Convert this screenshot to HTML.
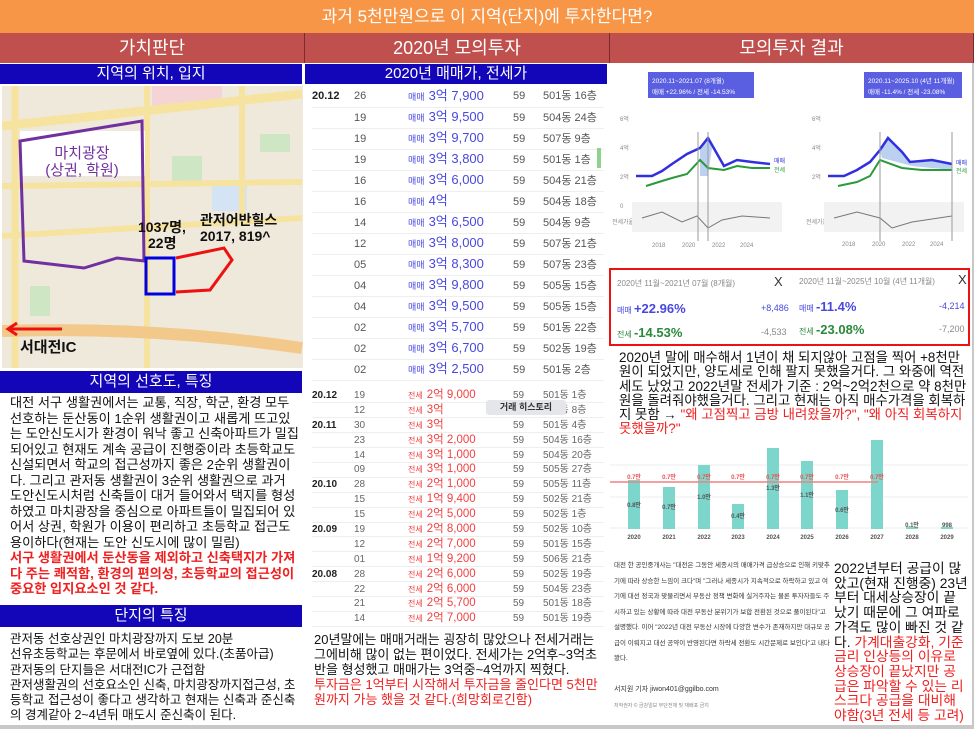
<!DOCTYPE html>
<html><head><meta charset="utf-8"><style>
*{margin:0;padding:0;box-sizing:border-box}
body{width:974px;height:729px;position:relative;background:#fff;font-family:"Liberation Sans","Noto Sans CJK KR",sans-serif;overflow:hidden}
.a{position:absolute}
.hdr{background:#c0504d;color:#fff;font-size:18px;text-align:center;line-height:30px;top:33px;height:30px;border-right:1px solid #7a2a28}
.blue{background:#1306b8;color:#fff;text-align:center;font-size:15px}
.t{font-size:12.5px;line-height:15.5px;color:#111}
.r{color:#f02020}
table{border-collapse:collapse;table-layout:fixed}
td{padding:0;overflow:hidden}
.s td{height:21px;line-height:16px;font-size:11px;color:#555;border-bottom:1px solid #eee;white-space:nowrap}
.s .p{color:#4848e0;font-size:13px}
.s .p small{font-size:9px;margin-right:4px}
.j td{height:14.9px;line-height:13px;font-size:10px;color:#666;border-bottom:1px solid #eee;white-space:nowrap}
.j .p{color:#f24040;font-size:11.5px}
.j .p small{font-size:8px;margin-right:4px}
.d{font-weight:bold;color:#222!important;font-size:11px}
</style></head><body>
<div class="a" style="left:0;top:0;width:974px;height:33px;background:#f79646;color:#fff;font-size:17px;text-align:center;line-height:33px">과거 5천만원으로 이 지역(단지)에 투자한다면?</div>
<div class="a hdr" style="left:0;width:305px">가치판단</div>
<div class="a hdr" style="left:305px;width:305px">2020년 모의투자</div>
<div class="a hdr" style="left:610px;width:364px">모의투자 결과</div>
<div class="a" style="left:0;top:63px;width:974px;height:666px;background:#c8c8c8"></div>
<div class="a" style="left:0;top:63px;width:305px;height:662px;background:#fff"></div>
<div class="a" style="left:305px;top:63px;width:305px;height:662px;background:#fff"></div>
<div class="a" style="left:610px;top:63px;width:362px;height:662px;background:#fff"></div>
<div class="a blue" style="left:0;top:64px;width:302px;height:20px;line-height:20px">지역의 위치, 입지</div>
<div class="a blue" style="left:305px;top:64px;width:302px;height:20px;line-height:20px">2020년 매매가, 전세가</div>

<svg class="a" style="left:2px;top:86px" width="301" height="282" viewBox="0 0 301 282">
<rect width="301" height="282" fill="#efe9dc"/>
<rect x="150" y="0" width="70" height="20" fill="#f4d4d4"/>
<rect x="170" y="70" width="30" height="30" fill="#cfe6c4"/>
<rect x="258" y="48" width="30" height="18" fill="#cfe6c4"/>
<rect x="28" y="200" width="20" height="30" fill="#cfe6c4"/>
<rect x="210" y="95" width="35" height="30" fill="#d4e4f4"/>
<path d="M0 40 L300 8" stroke="#f7e3a0" stroke-width="9"/>
<path d="M0 100 L300 96" stroke="#f7e3a0" stroke-width="6"/>
<path d="M0 150 L300 132" stroke="#f7e3a0" stroke-width="6"/>
<path d="M13 0 L13 282" stroke="#f7e3a0" stroke-width="7"/>
<path d="M145 0 L145 282" stroke="#f7e3a0" stroke-width="6"/>
<path d="M240 0 L240 130" stroke="#f7e3a0" stroke-width="6"/>
<path d="M0 245 Q150 240 300 262" stroke="#f2c98a" stroke-width="12" fill="none"/>
<rect x="18" y="45" width="125" height="45" fill="#fff"/>
<path d="M18 55 L140 35 L142 175 L115 172 L82 182 L22 175 Z" stroke="#7030a0" stroke-width="3" fill="none"/>
<rect x="144" y="172" width="28" height="36" stroke="#0000e0" stroke-width="3" fill="none"/>
<path d="M174 172 L222 162 L230 174 L208 204 L174 206" stroke="#ee1111" stroke-width="3" fill="none"/>
<path d="M8 243 L60 243" stroke="#ee1111" stroke-width="3"/>
<path d="M15 237 L6 243 L15 249" stroke="#ee1111" stroke-width="3" fill="none"/>
<text x="80" y="72" font-size="15" fill="#7030a0" text-anchor="middle" font-family="Liberation Sans,Noto Sans CJK KR,sans-serif">마치광장</text>
<text x="80" y="89" font-size="15" fill="#7030a0" text-anchor="middle" font-family="Liberation Sans,Noto Sans CJK KR,sans-serif">(상권, 학원)</text>
<text x="136" y="146" font-size="14" fill="#111" font-weight="bold" font-family="Liberation Sans,Noto Sans CJK KR,sans-serif">1037명,</text>
<text x="146" y="162" font-size="14" fill="#111" font-weight="bold" font-family="Liberation Sans,Noto Sans CJK KR,sans-serif">22명</text>
<text x="198" y="139" font-size="14" fill="#111" font-weight="bold" font-family="Liberation Sans,Noto Sans CJK KR,sans-serif">관저어반힐스</text>
<text x="198" y="155" font-size="14" fill="#111" font-weight="bold" font-family="Liberation Sans,Noto Sans CJK KR,sans-serif">2017, 819^</text>
<text x="18" y="266" font-size="15" fill="#111" font-weight="bold" font-family="Liberation Sans,Noto Sans CJK KR,sans-serif">서대전IC</text>
</svg>

<div class="a blue" style="left:0;top:371px;width:302px;height:22px;line-height:22px">지역의 선호도, 특징</div>
<div class="a t" style="left:10px;top:395px;width:290px;font-size:13.2px;line-height:15.5px">대전 서구 생활권에서는 교통, 직장, 학군, 환경 모두 선호하는 둔산동이 1순위 생활권이고 새롭게 뜨고있는 도안신도시가 환경이 워낙 좋고 신축아파트가 밀집되어있고 현재도 계속 공급이 진행중이라 초등학교도 신설되면서 학교의 접근성까지 좋은 2순위 생활권이다. 그리고 관저동 생활권이 3순위 생활권으로 과거 도안신도시처럼 신축들이 대거 들어와서 택지를 형성하였고 마치광장을 중심으로 아파트들이 밀집되어 있어서 상권, 학원가 이용이 편리하고 초등학교 접근도 용이하다(현재는 도안 신도시에 많이 밀림)<br><b class="r">서구 생활권에서 둔산동을 제외하고 신축택지가 가져다 주는 쾌적함, 환경의 편의성, 초등학교의 접근성이 중요한 입지요소인 것 같다.</b></div>
<div class="a blue" style="left:0;top:605px;width:302px;height:22px;line-height:22px">단지의 특징</div>
<div class="a t" style="left:10px;top:632px;width:292px;line-height:15.3px">관저동 선호상권인 마치광장까지 도보 20분<br>선유초등학교는 후문에서 바로옆에 있다.(초품아급)<br>관저동의 단지들은 서대전IC가 근접함<br>관저생활권의 선호요소인 신축, 마치광장까지접근성, 초등학교 접근성이 좋다고 생각하고 현재는 신축과 준신축의 경계같아 2~4년뒤 매도시 준신축이 된다.</div>

<table class="a s" style="left:312px;top:86px;width:292px">
<colgroup><col style="width:42px"><col style="width:54px"><col style="width:105px"><col style="width:30px"><col></colgroup>
<tr><td class="d">20.12</td><td>26</td><td class="p"><small>매매</small>3억 7,900</td><td>59</td><td>501동 16층</td></tr>
<tr><td></td><td>19</td><td class="p"><small>매매</small>3억 9,500</td><td>59</td><td>504동 24층</td></tr>
<tr><td></td><td>19</td><td class="p"><small>매매</small>3억 9,700</td><td>59</td><td>507동 9층</td></tr>
<tr><td></td><td>19</td><td class="p"><small>매매</small>3억 3,800</td><td>59</td><td>501동 1층</td></tr>
<tr><td></td><td>16</td><td class="p"><small>매매</small>3억 6,000</td><td>59</td><td>504동 21층</td></tr>
<tr><td></td><td>16</td><td class="p"><small>매매</small>4억</td><td>59</td><td>504동 18층</td></tr>
<tr><td></td><td>14</td><td class="p"><small>매매</small>3억 6,500</td><td>59</td><td>504동 9층</td></tr>
<tr><td></td><td>12</td><td class="p"><small>매매</small>3억 8,000</td><td>59</td><td>507동 21층</td></tr>
<tr><td></td><td>05</td><td class="p"><small>매매</small>3억 8,300</td><td>59</td><td>507동 23층</td></tr>
<tr><td></td><td>04</td><td class="p"><small>매매</small>3억 9,800</td><td>59</td><td>505동 15층</td></tr>
<tr><td></td><td>04</td><td class="p"><small>매매</small>3억 9,500</td><td>59</td><td>505동 15층</td></tr>
<tr><td></td><td>02</td><td class="p"><small>매매</small>3억 5,700</td><td>59</td><td>501동 22층</td></tr>
<tr><td></td><td>02</td><td class="p"><small>매매</small>3억 6,700</td><td>59</td><td>502동 19층</td></tr>
<tr><td></td><td>02</td><td class="p"><small>매매</small>3억 2,500</td><td>59</td><td>501동 2층</td></tr>
</table>
<div class="a" style="left:597px;top:148px;width:4px;height:20px;background:#8fd18f"></div>

<table class="a j" style="left:312px;top:388px;width:292px">
<colgroup><col style="width:42px"><col style="width:54px"><col style="width:105px"><col style="width:30px"><col></colgroup>
<tr><td class="d">20.12</td><td>19</td><td class="p"><small>전세</small>2억 9,000</td><td>59</td><td>501동 1층</td></tr>
<tr><td></td><td>12</td><td class="p"><small>전세</small>3억</td><td>59</td><td>502동 8층</td></tr>
<tr><td class="d">20.11</td><td>30</td><td class="p"><small>전세</small>3억</td><td>59</td><td>501동 4층</td></tr>
<tr><td></td><td>23</td><td class="p"><small>전세</small>3억 2,000</td><td>59</td><td>504동 16층</td></tr>
<tr><td></td><td>14</td><td class="p"><small>전세</small>3억 1,000</td><td>59</td><td>504동 20층</td></tr>
<tr><td></td><td>09</td><td class="p"><small>전세</small>3억 1,000</td><td>59</td><td>505동 27층</td></tr>
<tr><td class="d">20.10</td><td>28</td><td class="p"><small>전세</small>2억 1,000</td><td>59</td><td>505동 11층</td></tr>
<tr><td></td><td>15</td><td class="p"><small>전세</small>1억 9,400</td><td>59</td><td>502동 21층</td></tr>
<tr><td></td><td>15</td><td class="p"><small>전세</small>2억 5,000</td><td>59</td><td>502동 1층</td></tr>
<tr><td class="d">20.09</td><td>19</td><td class="p"><small>전세</small>2억 8,000</td><td>59</td><td>502동 10층</td></tr>
<tr><td></td><td>12</td><td class="p"><small>전세</small>2억 7,000</td><td>59</td><td>501동 15층</td></tr>
<tr><td></td><td>01</td><td class="p"><small>전세</small>1억 9,200</td><td>59</td><td>506동 21층</td></tr>
<tr><td class="d">20.08</td><td>28</td><td class="p"><small>전세</small>2억 6,000</td><td>59</td><td>502동 19층</td></tr>
<tr><td></td><td>22</td><td class="p"><small>전세</small>2억 6,000</td><td>59</td><td>504동 23층</td></tr>
<tr><td></td><td>21</td><td class="p"><small>전세</small>2억 5,700</td><td>59</td><td>501동 18층</td></tr>
<tr><td></td><td>14</td><td class="p"><small>전세</small>2억 7,000</td><td>59</td><td>501동 19층</td></tr>
</table>
<div class="a" style="left:486px;top:400px;width:80px;height:15px;background:#e4e6ea;border-radius:3px;font-size:9px;font-weight:bold;text-align:center;line-height:15px;color:#333">거래 히스토리</div>
<div class="a t" style="left:314px;top:632px;width:292px;line-height:15px;font-size:13px">20년말에는 매매거래는 굉장히 많았으나 전세거래는 그에비해 많이 없는 편이었다. 전세가는 2억후~3억초반을 형성했고 매매가는 3억중~4억까지 찍혔다.<br><span class="r">투자금은 1억부터 시작해서 투자금을 줄인다면 5천만원까지 가능 했을 것 같다.(희망회로긴함)</span></div>

<svg class="a" style="left:612px;top:66px" width="358" height="192" viewBox="0 0 358 192">
<g font-family="Liberation Sans,Noto Sans CJK KR,sans-serif">
<rect x="36" y="6" width="106" height="26" fill="#5a5ee0"/>
<text x="40" y="17" font-size="6.5" fill="#fff">2020.11~2021.07 (8개월)</text>
<text x="40" y="28" font-size="6.5" fill="#fff">매매 +22.96% / 전세 -14.53%</text>
<rect x="252" y="6" width="98" height="26" fill="#5a5ee0"/>
<text x="256" y="17" font-size="6.5" fill="#fff">2020.11~2025.10 (4년 11개월)</text>
<text x="256" y="28" font-size="6.5" fill="#fff">매매 -11.4% / 전세 -23.08%</text>
<g font-size="6" fill="#888"><text x="8" y="55">6억</text><text x="8" y="84">4억</text><text x="8" y="113">2억</text><text x="8" y="142">0</text><text x="0" y="158">전세가율</text>
<text x="40" y="181">2018</text><text x="70" y="181">2020</text><text x="100" y="181">2022</text><text x="128" y="181">2024</text>
<text x="200" y="55">6억</text><text x="200" y="84">4억</text><text x="200" y="113">2억</text><text x="194" y="158">전세가율</text>
<text x="230" y="180">2018</text><text x="260" y="180">2020</text><text x="290" y="180">2022</text><text x="318" y="180">2024</text></g>
<rect x="20" y="136" width="150" height="30" fill="#f2f2f2"/>
<rect x="212" y="136" width="140" height="30" fill="#f2f2f2"/>
<path d="M88 110 L88 84 L96 72 L100 82 L96 110Z" fill="#bcd0f0"/>
<path d="M24 110 L40 110 L50 105 L60 98 L75 88 L88 82 L96 72 L104 86 L112 100 L125 94 L140 96 L158 98" stroke="#3030e0" stroke-width="2.5" fill="none"/>
<path d="M34 120 L50 115 L60 112 L75 108 L88 94 L96 102 L112 104 L125 100 L140 102 L158 102" stroke="#2a9a3a" stroke-width="2" fill="none"/>
<path d="M30 152 L50 146 L70 156 L85 150 L96 162 L110 154 L130 150 L158 152" stroke="#777" stroke-width="1" fill="none"/>
<line x1="86" y1="66" x2="86" y2="175" stroke="#999"/><line x1="96" y1="66" x2="96" y2="175" stroke="#999"/>
<text x="162" y="97" font-size="6" fill="#3030e0">매매</text><text x="162" y="106" font-size="6" fill="#2a9a3a">전세</text>
<path d="M268 84 L276 72 L290 86 L298 96 L320 94 L340 98 L340 104 L300 100 L270 92Z" fill="#bcd0f0"/>
<path d="M216 110 L232 110 L245 104 L258 96 L268 84 L276 72 L290 86 L298 96 L320 94 L340 98" stroke="#3030e0" stroke-width="2.5" fill="none"/>
<path d="M226 120 L245 116 L258 110 L268 94 L290 102 L310 104 L340 104" stroke="#2a9a3a" stroke-width="2" fill="none"/>
<path d="M222 152 L245 146 L268 152 L280 162 L300 156 L340 150" stroke="#777" stroke-width="1" fill="none"/>
<line x1="268" y1="66" x2="268" y2="175" stroke="#999"/><line x1="340" y1="66" x2="340" y2="175" stroke="#999"/>
<text x="344" y="99" font-size="6" fill="#3030e0">매매</text><text x="344" y="107" font-size="6" fill="#2a9a3a">전세</text>
</g></svg>

<div class="a" style="left:609px;top:268px;width:361px;height:78px;border:2px solid #ee1111;font-size:8px;color:#888">
<div class="a" style="left:6px;top:8px">2020년 11월~2021년 07월 (8개월)</div>
<div class="a" style="left:163px;top:4px;font-size:13px;color:#333">X</div>
<div class="a" style="left:6px;top:31px;color:#4848e0">매매 <b style="font-size:13px">+22.96%</b></div>
<div class="a" style="left:150px;top:33px;color:#4848e0;font-size:9px">+8,486</div>
<div class="a" style="left:6px;top:55px;color:#2a8a3a">전세 <b style="font-size:13px">-14.53%</b></div>
<div class="a" style="left:150px;top:57px;color:#888;font-size:9px">-4,533</div>
<div class="a" style="left:188px;top:6px">2020년 11월~2025년 10월 (4년 11개월)</div>
<div class="a" style="left:347px;top:2px;font-size:13px;color:#333">X</div>
<div class="a" style="left:188px;top:29px;color:#4848e0">매매 <b style="font-size:13px">-11.4%</b></div>
<div class="a" style="left:328px;top:31px;color:#4848e0;font-size:9px">-4,214</div>
<div class="a" style="left:188px;top:52px;color:#2a8a3a">전세 <b style="font-size:13px">-23.08%</b></div>
<div class="a" style="left:328px;top:54px;color:#888;font-size:9px">-7,200</div>
</div>
<div class="a t" style="left:619px;top:351px;width:350px;line-height:14.3px;font-size:13.4px">2020년 말에 매수해서 1년이 채 되지않아 고점을 찍어 +8천만원이 되었지만, 양도세로 인해 팔지 못했을거다. 그 와중에 역전세도 났었고 2022년말 전세가 기준 : 2억~2억2천으로 약 8천만원을 돌려줘야했을거다. 그리고 현재는 아직 매수가격을 회복하지 못함 → <span class="r">"왜 고점찍고 금방 내려왔을까?", "왜 아직 회복하지 못했을까?"</span></div>

<svg class="a" style="left:610px;top:440px" width="362" height="112" viewBox="0 0 362 112">
<g font-family="Liberation Sans,Noto Sans CJK KR,sans-serif" font-size="6" font-weight="bold" text-anchor="middle">
<line x1="0" y1="25" x2="358" y2="25" stroke="#eee"/><line x1="0" y1="57" x2="358" y2="57" stroke="#eee"/><line x1="0" y1="88" x2="358" y2="88" stroke="#eee"/>
<rect x="18" y="40" width="12" height="49" fill="#7dd6cc"/>
<rect x="53" y="47" width="12" height="42" fill="#7dd6cc"/>
<rect x="88" y="25" width="12" height="64" fill="#7dd6cc"/>
<rect x="122" y="64" width="12" height="25" fill="#7dd6cc"/>
<rect x="157" y="8" width="12" height="81" fill="#7dd6cc"/>
<rect x="191" y="21" width="12" height="68" fill="#7dd6cc"/>
<rect x="226" y="50" width="12" height="39" fill="#7dd6cc"/>
<rect x="261" y="0" width="12" height="89" fill="#7dd6cc"/>
<rect x="296" y="87" width="12" height="2" fill="#7dd6cc"/>
<rect x="331" y="87" width="12" height="2" fill="#7dd6cc"/>
<line x1="0" y1="42" x2="268" y2="42" stroke="#f08080" stroke-width="1.5"/>
<g fill="#f05050"><text x="24" y="39">0.7만</text><text x="59" y="39">0.7만</text><text x="94" y="39">0.7만</text><text x="128" y="39">0.7만</text><text x="163" y="39">0.7만</text><text x="197" y="39">0.7만</text><text x="232" y="39">0.7만</text><text x="267" y="39">0.7만</text></g>
<g fill="#555"><text x="24" y="67">0.8만</text><text x="59" y="69">0.7만</text><text x="94" y="59">1.0만</text><text x="128" y="78">0.4만</text><text x="163" y="50">1.3만</text><text x="197" y="57">1.1만</text><text x="232" y="72">0.6만</text><text x="302" y="87">0.1만</text><text x="337" y="87">998</text>
<text x="24" y="99">2020</text><text x="59" y="99">2021</text><text x="94" y="99">2022</text><text x="128" y="99">2023</text><text x="163" y="99">2024</text><text x="197" y="99">2025</text><text x="232" y="99">2026</text><text x="267" y="99">2027</text><text x="302" y="99">2028</text><text x="337" y="99">2029</text></g>
</g></svg>

<div class="a" style="left:614px;top:558px;width:218px;font-size:6.5px;line-height:15.5px;color:#333">대전 한 공인중개사는 "대전은 그동안 세종시의 매매가격 급상승으로 인해 키맞추기에 따라 상승한 느낌이 크다"며 "그러나 세종시가 지속적으로 하락하고 있고 여기에 대선 정국과 맞물리면서 부동산 정책 변화에 실거주자는 물론 투자자들도 주시하고 있는 상황에 따라 대전 부동산 분위기가 보합 전환된 것으로 풀이된다"고 설명했다. 이어 "2022년 대전 부동산 시장에 다양한 변수가 존재하지만 대규모 공급이 이뤄지고 대선 공약이 반영된다면 하락세 전환도 시간문제로 보인다"고 내다봤다.<br><br><span style="font-size:7px">서지원 기자 jiwon401@ggilbo.com</span><br><span style="font-size:5px;color:#888">저작권자 © 금강일보 무단전재 및 재배포 금지</span></div>
<div class="a" style="left:834px;top:562px;width:134px;font-size:13.8px;line-height:14.7px;color:#111">2022년부터 공급이 많았고(현재 진행중) 23년부터 대세상승장이 끝났기 때문에 그 여파로 가격도 많이 빠진 것 같다. <span class="r">가계대출강화, 기준금리 인상등의 이유로 상승장이 끝났지만 공급은 파악할 수 있는 리스크다 공급을 대비해야함(3년 전세 등 고려)</span></div>
</body></html>
